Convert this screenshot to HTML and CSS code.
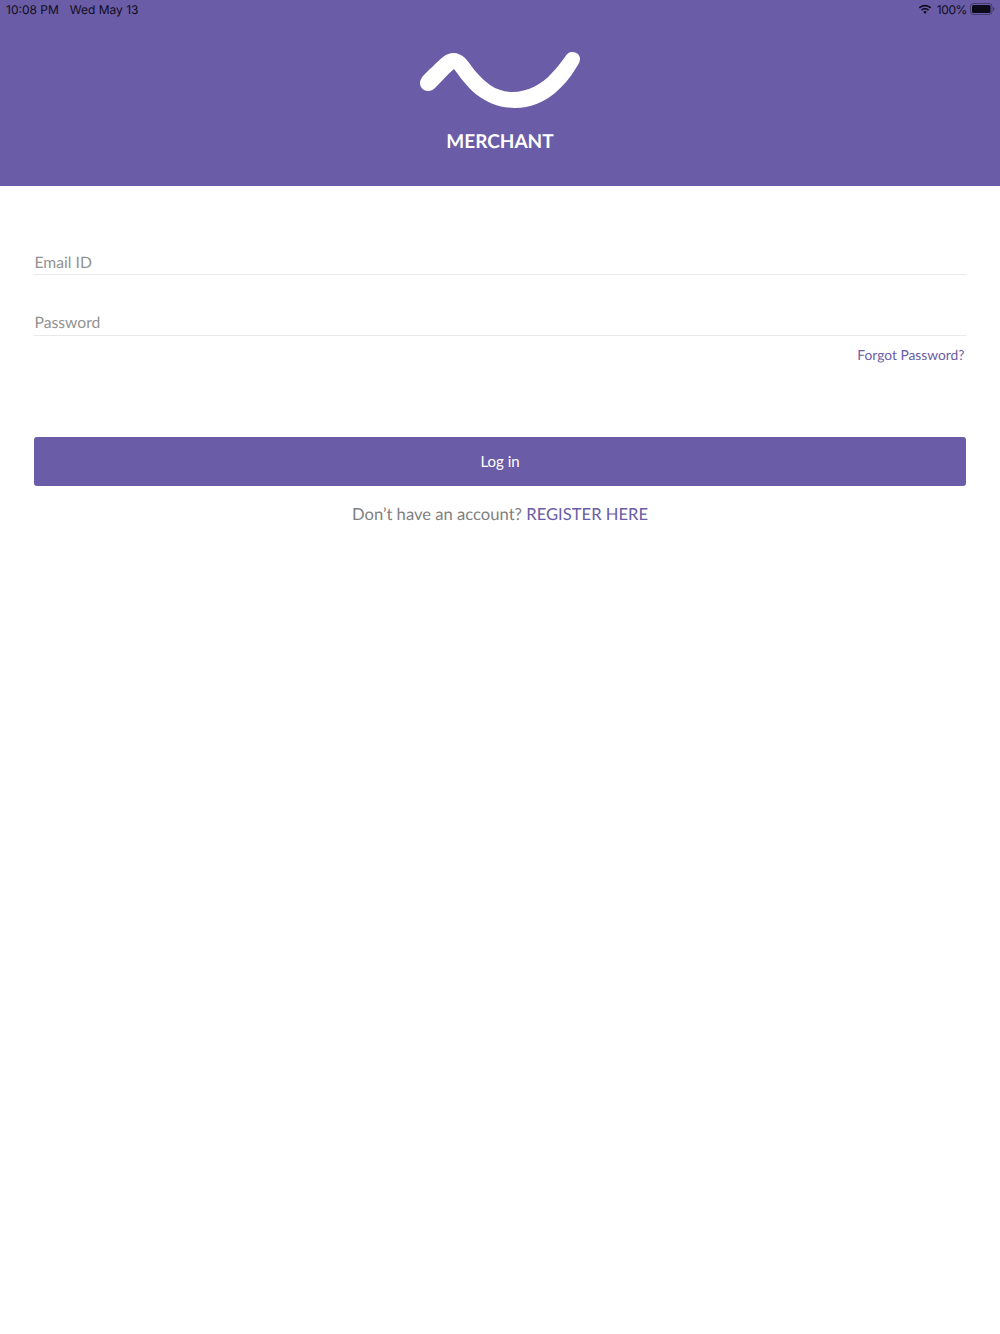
FILE: index.html
```html
<!DOCTYPE html>
<html lang="en">
<head>
<meta charset="utf-8">
<title>Merchant</title>
<link rel="stylesheet" href="styles.css">
</head>
<body>
<header class="header">
  <div class="status">
    <div class="status-left"><span>10:08 PM</span><span>Wed May 13</span></div>
    <div class="status-right">
      <svg class="wifi" width="14" height="11" viewBox="0 0 15 11"><path d="M7.5 2.2c2.1 0 4 .8 5.5 2.2l1.1-1.2C12.300 1.500 10 .5 7.500.5S2.700 1.500.9 3.200L2 4.400c1.500-1.400 3.400-2.200 5.500-2.200zM7.500 5.500c1.200 0 2.300.5 3.200 1.300l1.100-1.200C10.700 4.500 9.200 3.800 7.500 3.800s-3.200.7-4.300 1.800l1.100 1.200c.9-.8 2-1.300 3.200-1.300zM7.500 7.100c-.8 0-1.500.3-2 .8l2 2.300 2-2.300c-.5-.5-1.200-.8-2-.8z" fill="#100d20"/></svg>
      <span class="percent">100%</span>
      <svg class="battery" width="25" height="12" viewBox="0 0 25 12"><rect x=".5" y=".5" width="21.500" height="11" rx="3" fill="none" stroke="#17142a" stroke-opacity=".45"/><rect x="2" y="2" width="18.500" height="8" rx="1.500" fill="#0c0a18"/><path d="M23 4v4c.8-.3 1.400-1.100 1.400-2S23.800 4.300 23 4z" fill="#17142a" fill-opacity=".5"/></svg>
    </div>
  </div>
  <svg class="logo" width="160" height="60" viewBox="0 0 160 60"><path d="M0 33C0 30 1.500 28 3 26C8 21 16 13 23 7C27 4 30 3 33 3C38 3 42 5 45 8C50 13 53 19 57 23C65 32 76 42 92 42C108 42 122 34 131 24C137 18 141 12 145 7C147 3.500 149 2 152 2C157 2 160 5 160 9C160 12 158 15 156 18C150 28 143 36 135 43C124 52 110 58 95 58C80 58 68 53 57 45C47 37 40 27 34 19C28 24 22 31 15 38C13 40 11 41 8 41C3 41 0 37 0 33Z" fill="#fff"/></svg>
  <div class="brand">MERCHANT</div>
</header>
<main class="form">
  <div class="field field-email">Email ID</div>
  <div class="field field-password">Password</div>
  <a class="forgot">Forgot Password?</a>
  <button class="login" type="button">Log in</button>
  <p class="register">Don’t have an account? <a class="register-link">REGISTER HERE</a></p>
</main>
</body>
</html>
```
FILE: styles.css
```css
* { box-sizing: border-box; }
html, body { margin: 0; }
body { width: 1000px; height: 1334px; background: #fff; font-family: Lato, "Liberation Sans", sans-serif; overflow: hidden; text-rendering: geometricPrecision; }
.header { height: 186px; background: #6a5ca6; display: flex; flex-direction: column; align-items: center; }
.status { width: 100%; height: 18px; padding: 0 5px 0 6px; display: flex; justify-content: space-between; align-items: center; font-family: Inter, "Liberation Sans", sans-serif; font-size: 12px; color: #100d20; }
.status-left { display: flex; gap: 11px; }
.status-right { display: flex; align-items: center; gap: 3px; }
.wifi { margin-right: 2px; }
.percent { letter-spacing: -.4px; }
.logo { margin-top: 32px; display: block; }
.brand { margin-top: 20px; font-size: 19px; line-height: 24px; font-weight: 700; color: #fff; }
.form { padding: 0 34px; display: flex; flex-direction: column; }
.field { padding-left: .5px; display: flex; align-items: flex-end; font-size: 15.700px; line-height: 22px; color: #929292; border-bottom: 1px solid #e9e9e9; }
.field-email { height: 89px; }
.field-password { height: 61px; padding-bottom: 1px; }
.forgot { align-self: flex-end; margin-top: 10px; margin-right: 1.500px; font-size: 13.800px; line-height: 18px; color: #6a5ca6; }
.login { margin-top: 73px; width: 100%; height: 49px; border: 0; border-radius: 3px; background: #6a5ca6; color: #fff; font-family: inherit; font-size: 15px; padding-bottom: 2px; }
.register { margin: 16px 0 0; text-align: center; font-size: 16.600px; line-height: 24px; color: #808080; }
.register-link { color: #6a5ca6; }
```
